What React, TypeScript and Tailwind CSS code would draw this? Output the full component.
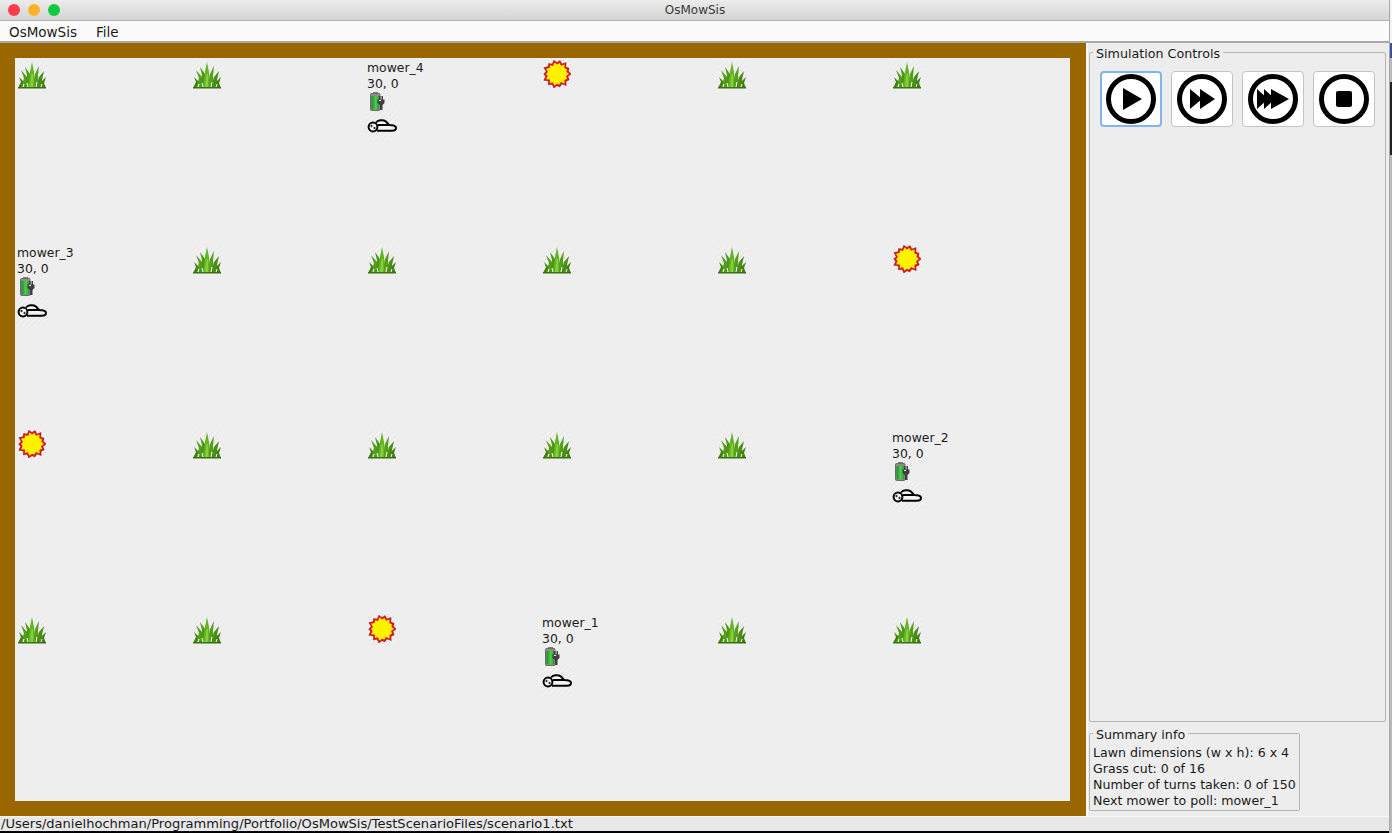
const font = "font-['DejaVu_Sans',sans-serif]";

type Tile =
  | { kind: 'grass' }
  | { kind: 'crater' }
  | { kind: 'mower'; name: string };

const lawn: Tile[][] = [
  [{ kind: 'grass' }, { kind: 'grass' }, { kind: 'mower', name: 'mower_4' }, { kind: 'crater' }, { kind: 'grass' }, { kind: 'grass' }],
  [{ kind: 'mower', name: 'mower_3' }, { kind: 'grass' }, { kind: 'grass' }, { kind: 'grass' }, { kind: 'grass' }, { kind: 'crater' }],
  [{ kind: 'crater' }, { kind: 'grass' }, { kind: 'grass' }, { kind: 'grass' }, { kind: 'grass' }, { kind: 'mower', name: 'mower_2' }],
  [{ kind: 'grass' }, { kind: 'grass' }, { kind: 'crater' }, { kind: 'mower', name: 'mower_1' }, { kind: 'grass' }, { kind: 'grass' }]
];

// uneven spike lengths, the crater edge in the picture is jagged
const jag = [14.5, 11.2, 13.6, 11.6, 14.8, 11, 13.2, 11.8, 14.4, 11.3, 13.9, 11, 14.6, 11.7, 13.3, 11.2, 14.7, 11.5, 13.5, 11, 14.2, 11.6, 13.8, 11.2, 14.6, 11.4, 13.4, 11.8];

function ring(scale: number) {
  return jag
    .map((r, i) => {
      const a = (Math.PI * 2 * i) / jag.length;
      return `${(14 + r * scale * Math.cos(a)).toFixed(1)},${(14 + r * scale * Math.sin(a)).toFixed(1)}`;
    })
    .join(' ');
}

function Hatch({ id, size }: { id: string; size: number }) {
  return (
    <>
      <defs>
        <pattern id={id} width="4" height="4" patternUnits="userSpaceOnUse" patternTransform="rotate(45)">
          <rect width="2" height="4" fill="#f6f6f6" />
          <rect x="2" width="2" height="4" fill="#e6e6e6" />
        </pattern>
      </defs>
      <rect width={size} height={size} fill={`url(#${id})`} opacity="0.55" />
    </>
  );
}

function GrassIcon() {
  return (
    <svg width="28" height="28" viewBox="0 0 28 28" className="block">
      <Hatch id="hatch-grass" size={28} />
      <polygon points="0,27 3,21 1,16 6,21 8,27" fill="#3f7f12" />
      <polygon points="3,27 6,17 3,9 9,16 11,27" fill="#559c1a" />
      <polygon points="7,27 9,14 7,6 12,13 14,27" fill="#4f9618" />
      <polygon points="10,27 12,11 14,1 16,11 18,27" fill="#62b422" />
      <polygon points="15,27 17,13 21,5 20,15 21,27" fill="#569f1b" />
      <polygon points="18,27 21,16 26,10 24,19 24,27" fill="#4b8e16" />
      <polygon points="22,27 24,20 28,16 26,22 28,27" fill="#3f7f12" />
      <polygon points="12,27 13.5,13 15,13 15.5,27" fill="#86d03e" />
      <path d="M5 26l1-3M10 26l-1-4M18 26l1-5M23 26l1-3" stroke="#ffffff" strokeWidth="1" />
      <rect x="0" y="26" width="28" height="1.5" fill="#38700f" />
    </svg>
  );
}

function CraterIcon() {
  return (
    <svg width="28" height="28" viewBox="0 0 28 28" className="block">
      <Hatch id="hatch-crater" size={28} />
      <polygon points={ring(1)} fill="#ea1520" stroke="#3a0b0b" strokeWidth="0.35" />
      <polygon points={ring(0.82)} fill="#fff200" />
    </svg>
  );
}

function BatteryIcon() {
  return (
    <svg width="15" height="19" viewBox="0 0 15 19" className="block">
      <defs>
        <linearGradient id="cell" x1="0" x2="1" y1="0" y2="0">
          <stop offset="0" stopColor="#1b8a2b" />
          <stop offset="0.55" stopColor="#55c950" />
          <stop offset="1" stopColor="#2f9a35" />
        </linearGradient>
      </defs>
      <rect x="3" y="0" width="5" height="2" fill="#7d7d7d" />
      <rect x="0.5" y="1.5" width="9.5" height="17" rx="1" fill="#8a8f8a" stroke="#6c6c6c" />
      <rect x="1.5" y="4" width="7.5" height="13.5" fill="url(#cell)" />
      <path d="M7.5 7.5H9V4h1.5v3.5h1V4H13v3.5h1.5V11L12.5 13v5h-2.5v-5L7.5 11z" fill="#3f3f3f" />
      <path d="M9 8.5h2" stroke="#eeeeee" strokeWidth="1" />
    </svg>
  );
}

function MowerIcon() {
  return (
    <svg width="30" height="30" viewBox="0 0 30 30" className="block">
      <Hatch id="hatch-mower" size={30} />
      <g transform="translate(1 8)" fill="none" stroke="#000">
        <path d="M8 3.5C10 1 15 .5 18 2.5l3 3.5c4 0 7 1 7 3s-2 2.7-4 2.7H9" strokeWidth="2" fill="#f4f4f4" />
        <path d="M10 6h12" strokeWidth="2" />
        <circle cx="5" cy="8" r="4.4" strokeWidth="2" fill="#f4f4f4" />
        <circle cx="3.5" cy="7" r="0.8" fill="#000" strokeWidth="0.5" />
        <circle cx="6.5" cy="9" r="0.8" fill="#000" strokeWidth="0.5" />
      </g>
    </svg>
  );
}

function RoundButton({ focused, children }: { focused?: boolean; children: React.ReactNode }) {
  return (
    <button
      className={
        focused
          ? 'flex h-[56px] w-[62px] items-center justify-center rounded-[4px] border-2 border-[#82b5f0] bg-white'
          : 'flex h-[56px] w-[62px] items-center justify-center rounded-[4px] border border-[#c4c4c4] bg-white'
      }
    >
      <svg width="50" height="50" viewBox="0 0 50 50">
        <circle cx="25" cy="25" r="22.5" fill="none" stroke="#000" strokeWidth="5" />
        {children}
      </svg>
    </button>
  );
}

function LawnCell({ tile }: { tile: Tile }) {
  if (tile.kind === 'grass') {
    return (
      <div className="pl-px pt-[3px]">
        <GrassIcon />
      </div>
    );
  }
  if (tile.kind === 'crater') {
    return (
      <div className="pl-px pt-[2px]">
        <CraterIcon />
      </div>
    );
  }
  return (
    <div className="flex flex-col items-start text-[12.4px] leading-[16px] text-[#1a1a1a]">
      <span className="mt-[2px]">{tile.name}</span>
      <span>30, 0</span>
      <div className="ml-[3px]">
        <BatteryIcon />
      </div>
      <MowerIcon />
    </div>
  );
}

function Legend({ title, children, className }: { title: string; children: React.ReactNode; className: string }) {
  return (
    <fieldset className={`rounded-[2px] border border-[#b5b5b5] px-[3px] ${className}`}>
      <legend className="px-[3px] pt-[4px] text-[12.7px] leading-[14px] text-[#1a1a1a]">{title}</legend>
      {children}
    </fieldset>
  );
}

export default function App() {
  return (
    <div className={`flex h-[833px] w-[1392px] overflow-hidden ${font}`}>
      <div className="flex h-full w-[1389px] shrink-0 flex-col bg-[#ededed]">
        <div className="relative flex h-[21px] shrink-0 items-center justify-center border-b border-[#b4b4b4] bg-gradient-to-b from-[#ececec] to-[#d4d4d4] pl-px">
          <div className="absolute left-[8px] top-[4px] flex gap-[8px]">
            <span className="h-[12px] w-[12px] rounded-full bg-[#fc3d47]" />
            <span className="h-[12px] w-[12px] rounded-full bg-[#fdb325]" />
            <span className="h-[12px] w-[12px] rounded-full bg-[#12c93d]" />
          </div>
          <span className="text-[12px] text-[#3a3a3a]">OsMowSis</span>
        </div>
        <div className="flex h-[22px] shrink-0 items-center gap-[19px] border-b-2 border-[#a8a8a8] bg-[#fbfbfb] pl-[9px] pt-[2px] text-[13.5px] text-[#1a1a1a]">
          <span>OsMowSis</span>
          <span>File</span>
        </div>
        <div className="flex h-[774px] shrink-0 border-b border-[#f8f8f8]">
          <div className="w-[1086px] shrink-0 border-y-[15px] border-l-[15px] border-r-[16px] border-[#996600] bg-[#eeeeee]">
            <div className="grid grid-cols-[repeat(6,175px)] grid-rows-[repeat(4,185px)] pl-[2px]">
              {lawn.flatMap((row, y) =>
                row.map((tile, x) => <LawnCell key={`${x}-${y}`} tile={tile} />)
              )}
            </div>
          </div>
          <div className="flex flex-1 flex-col border-l-2 border-r border-[#f8f8f8] pl-px pr-[3px]">
            <Legend title="Simulation Controls" className="h-[679px]">
              <div className="flex gap-[9px] px-[7px] pt-[10px]">
                <RoundButton focused>
                  <polygon points="17,14 17,36 36,25" />
                </RoundButton>
                <RoundButton>
                  <polygon points="13,15 13,35 25,25" />
                  <polygon points="23,15 23,35 38,25" />
                </RoundButton>
                <RoundButton>
                  <polygon points="9,15 9,35 20,25" />
                  <polygon points="16,15 16,35 27,25" />
                  <polygon points="23,15 23,35 41,25" />
                </RoundButton>
                <RoundButton>
                  <rect x="17" y="17" width="16" height="16" rx="2" />
                </RoundButton>
              </div>
            </Legend>
            <Legend title="Summary info" className="mt-[2px] w-[211px] pb-[1px]">
              <div className="mt-[3px] text-[12.6px] leading-[16px] text-[#1a1a1a]">
                <div>Lawn dimensions (w x h): 6 x 4</div>
                <div>Grass cut: 0 of 16</div>
                <div>Number of turns taken: 0 of 150</div>
                <div>Next mower to poll: mower_1</div>
              </div>
            </Legend>
          </div>
        </div>
        <div className="flex h-[14px] shrink-0 items-center bg-[#e8e8e8] pl-px text-[13.05px] text-[#1a1a1a]">
          /Users/danielhochman/Programming/Portfolio/OsMowSis/TestScenarioFiles/scenario1.txt
        </div>
        <div className="h-[2px] shrink-0 bg-black" />
      </div>
      {/* sliver of the desktop behind the window */}
      <div className="flex w-[3px] shrink-0 flex-col border-l border-[#a9a9a9]">
        <div className="h-[43px] bg-[#f4f4f4]" />
        <div className="h-[15px] bg-[#3f5194]" />
        <div className="h-[24px] bg-[#b9b9b9]" />
        <div className="h-[73px] bg-[#1c2428]" />
        <div className="flex-1 bg-[#b9b9b9]" />
      </div>
    </div>
  );
}
